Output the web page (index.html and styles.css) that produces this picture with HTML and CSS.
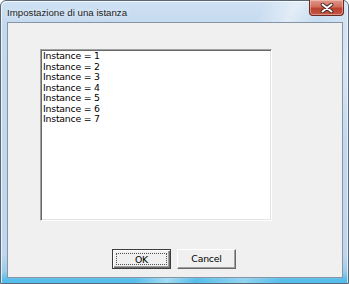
FILE: index.html
```html
<!DOCTYPE html>
<html>
<head>
<meta charset="utf-8">
<link rel="stylesheet" href="styles.css">
</head>
<body>
<div class="window">
  <div class="titlebar">
    <span class="title">Impostazione di una istanza</span>
    <div class="close">
      <svg width="16" height="10" viewBox="0 0 16 10">
        <path d="M3.5 1.5 L12.5 8.5 M12.5 1.5 L3.5 8.5" stroke="#3a2020" stroke-width="3.6" stroke-linecap="round" fill="none"/>
        <path d="M3.5 1.5 L12.5 8.5 M12.5 1.5 L3.5 8.5" stroke="#ffffff" stroke-width="2" stroke-linecap="round" fill="none"/>
      </svg>
    </div>
  </div>
  <div class="client">
    <div class="listbox">
      <div class="item">Instance = 1</div>
      <div class="item">Instance = 2</div>
      <div class="item">Instance = 3</div>
      <div class="item">Instance = 4</div>
      <div class="item">Instance = 5</div>
      <div class="item">Instance = 6</div>
      <div class="item">Instance = 7</div>
    </div>
    <div class="buttons">
      <div class="btn default"><span class="focus">OK</span></div>
      <div class="btn">Cancel</div>
    </div>
  </div>
</div>
</body>
</html>
```
FILE: styles.css
```css
html, body {
  margin: 0;
  padding: 0;
  background: #ffffff;
}
body {
  width: 349px;
  height: 284px;
  overflow: hidden;
}
.window {
  box-sizing: border-box;
  width: 349px;
  height: 284px;
  border: 1px solid #5a6876;
  border-radius: 6px 6px 0 0;
  background:
    linear-gradient(115deg, rgba(255,255,255,0) 55%, rgba(255,255,255,0.45) 62%, rgba(255,255,255,0) 68%, rgba(255,255,255,0.35) 78%, rgba(255,255,255,0) 86%),
    linear-gradient(180deg, #cfe1f3 0%, #c3d9ef 10%, #bfd6ee 90%, #9ccbea 96%, #55bde9 99%);
  box-shadow: inset 1px 1px 0 rgba(255,255,255,0.7), inset -1px 0 0 rgba(255,255,255,0.6);
  padding: 0 5px 5px 6px;
  display: flex;
  flex-direction: column;
  font-family: "Liberation Sans", Arial, sans-serif;
}
.titlebar {
  height: 21px;
  display: flex;
  align-items: flex-start;
  justify-content: space-between;
  position: relative;
}
.title {
  font-size: 9.7px;
  color: #1c1c1c;
  margin-top: 6px;
  text-shadow: 0 0 4px rgba(255,255,255,0.9);
}
.close {
  box-sizing: border-box;
  width: 35px;
  height: 16px;
  margin-top: -1px;
  margin-right: -1px;
  border: 1px solid #6a2a22;
  border-top: none;
  border-radius: 0 0 4px 4px;
  background: linear-gradient(180deg, #e0988a 0%, #d06e5c 45%, #bb4230 55%, #c45644 100%);
  box-shadow: inset 0 0 0 1px rgba(255,220,210,0.45);
  display: flex;
  align-items: center;
  justify-content: center;
}
.close svg {
  display: block;
}
.client {
  flex: 1;
  border: 1px solid #8595a6;
  background: #f0f0f0;
  padding: 26px 0 0 32px;
  display: flex;
  flex-direction: column;
  align-items: flex-start;
}
.listbox {
  box-sizing: border-box;
  width: 232px;
  height: 172px;
  background: #ffffff;
  border-top: 1px solid #a0a0a0;
  border-left: 1px solid #a0a0a0;
  border-right: 1px solid #ffffff;
  border-bottom: 1px solid #ffffff;
  box-shadow: inset 1px 1px 0 #696969, inset -1px -1px 0 #e3e3e3;
  padding: 1px 0 0 2px;
  font-family: "DejaVu Sans", "Liberation Sans", sans-serif;
  font-size: 9.3px;
  line-height: 10.5px;
  color: #000000;
  letter-spacing: -0.2px;
}
.buttons {
  display: flex;
  gap: 6px;
  margin-top: 28px;
  margin-left: 72px;
}
.btn {
  box-sizing: border-box;
  width: 59px;
  height: 20px;
  background: #f0f0f0;
  border-top: 1px solid #ffffff;
  border-left: 1px solid #ffffff;
  border-right: 1px solid #696969;
  border-bottom: 1px solid #696969;
  box-shadow: inset -1px -1px 0 #a0a0a0;
  font-family: "DejaVu Sans", "Liberation Sans", sans-serif;
  font-size: 9.3px;
  letter-spacing: -0.2px;
  color: #000000;
  display: flex;
  align-items: center;
  justify-content: center;
  padding-bottom: 1px;
}
.btn.default {
  border: 1px solid #3c3c3c;
  box-shadow: inset 1px 1px 0 #ffffff, inset -1px -1px 0 #696969, inset -2px -2px 0 #a0a0a0;
  padding: 3px;
}
.focus {
  flex: 1;
  align-self: stretch;
  border: 1px dotted #505050;
  display: flex;
  align-items: center;
  justify-content: center;
}
```
